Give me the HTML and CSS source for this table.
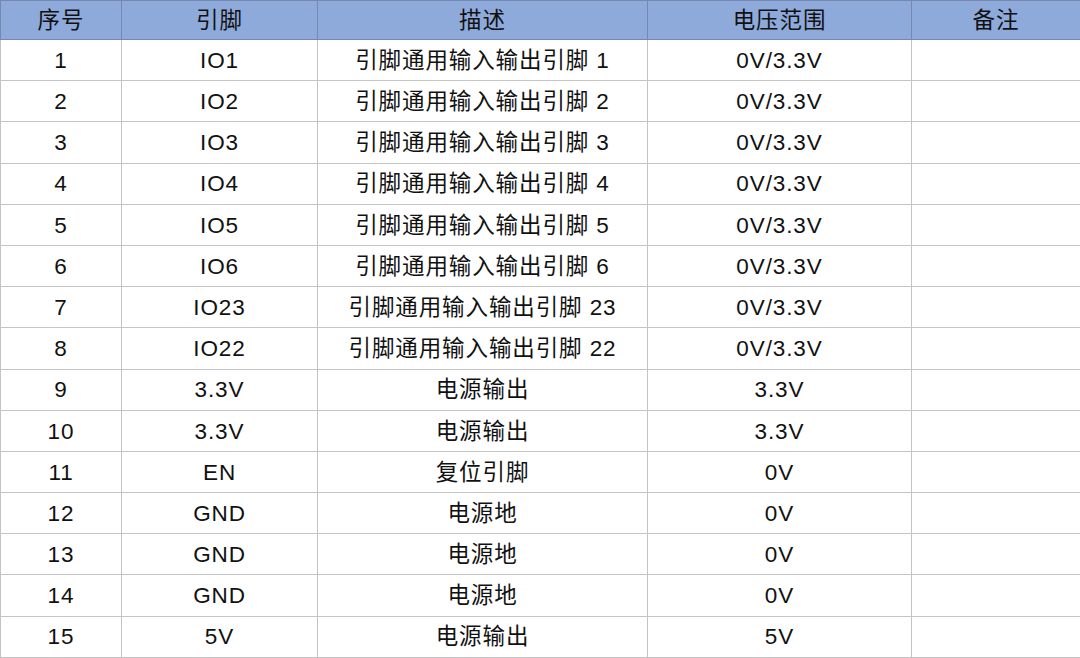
FILE: index.html
```html
<!DOCTYPE html>
<html lang="zh">
<head>
<meta charset="utf-8">
<title>引脚表</title>
<link rel="stylesheet" href="styles.css">
</head>
<body>
<table class="pin-table">
  <colgroup>
    <col class="c1"><col class="c2"><col class="c3"><col class="c4"><col class="c5">
  </colgroup>
  <thead>
    <tr><th>序号</th><th>引脚</th><th>描述</th><th>电压范围</th><th>备注</th></tr>
  </thead>
  <tbody>
    <tr><td>1</td><td>IO1</td><td>引脚通用输入输出引脚 1</td><td>0V/3.3V</td><td></td></tr>
    <tr><td>2</td><td>IO2</td><td>引脚通用输入输出引脚 2</td><td>0V/3.3V</td><td></td></tr>
    <tr><td>3</td><td>IO3</td><td>引脚通用输入输出引脚 3</td><td>0V/3.3V</td><td></td></tr>
    <tr><td>4</td><td>IO4</td><td>引脚通用输入输出引脚 4</td><td>0V/3.3V</td><td></td></tr>
    <tr><td>5</td><td>IO5</td><td>引脚通用输入输出引脚 5</td><td>0V/3.3V</td><td></td></tr>
    <tr><td>6</td><td>IO6</td><td>引脚通用输入输出引脚 6</td><td>0V/3.3V</td><td></td></tr>
    <tr><td>7</td><td>IO23</td><td>引脚通用输入输出引脚 23</td><td>0V/3.3V</td><td></td></tr>
    <tr><td>8</td><td>IO22</td><td>引脚通用输入输出引脚 22</td><td>0V/3.3V</td><td></td></tr>
    <tr><td>9</td><td>3.3V</td><td>电源输出</td><td>3.3V</td><td></td></tr>
    <tr><td>10</td><td>3.3V</td><td>电源输出</td><td>3.3V</td><td></td></tr>
    <tr><td>11</td><td>EN</td><td>复位引脚</td><td>0V</td><td></td></tr>
    <tr><td>12</td><td>GND</td><td>电源地</td><td>0V</td><td></td></tr>
    <tr><td>13</td><td>GND</td><td>电源地</td><td>0V</td><td></td></tr>
    <tr><td>14</td><td>GND</td><td>电源地</td><td>0V</td><td></td></tr>
    <tr><td>15</td><td>5V</td><td>电源输出</td><td>5V</td><td></td></tr>
  </tbody>
</table>
</body>
</html>
```
FILE: styles.css
```css
html, body {
  margin: 0;
  padding: 0;
  background: #ffffff;
}
.pin-table {
  width: 1080px;
  border-collapse: collapse;
  table-layout: fixed;
  font-family: "Liberation Sans", "Noto Sans CJK SC", sans-serif;
  font-size: 22.5px;
  letter-spacing: 0.9px;
  color: #111111;
  border: 1px solid #b8b8b8;
}
.c1 { width: 121px; }
.c2 { width: 196px; }
.c3 { width: 330px; }
.c4 { width: 264px; }
.c5 { width: 169px; }
.pin-table th,
.pin-table td {
  padding: 2px 0 0;
  text-align: center;
  vertical-align: middle;
  font-weight: normal;
  line-height: 1;
}
.pin-table th {
  height: 36px;
  background: #8eaadb;
  border: 1px solid #7488b0;
}
.pin-table td {
  height: 38.2px;
  border: 1px solid #c4c4c4;
}
```
